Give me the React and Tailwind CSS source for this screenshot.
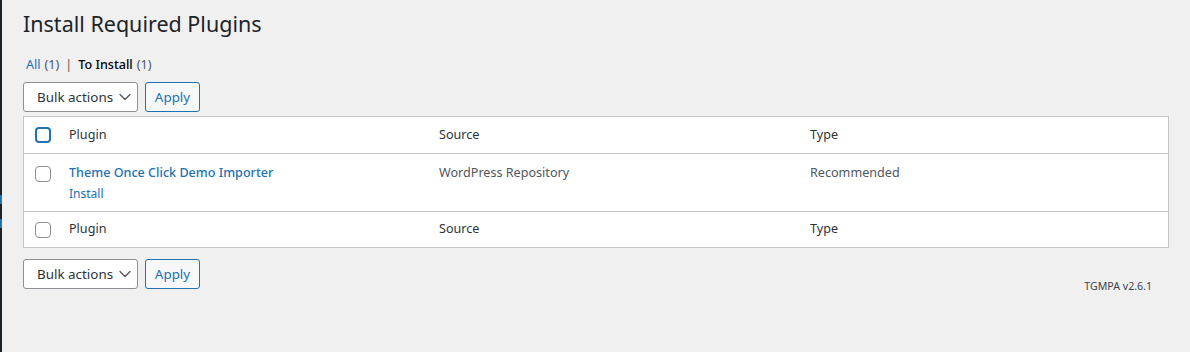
import { ChevronDown } from "lucide-react";

const font = { fontFamily: '"Noto Sans", "Open Sans", sans-serif' };

function Checkbox({ focused }) {
  return (
    <span
      className={
        "block w-4 h-4 rounded-[4px] bg-white " +
        (focused
          ? "border-2 border-[#2271b1]"
          : "border border-[#8c8f94]")
      }
    />
  );
}

function BulkActions() {
  return (
    <div className="flex gap-[7px] whitespace-nowrap">
      <div className="flex items-center justify-between w-[115px] h-[30px] pl-[13px] pr-[2px] bg-white border border-[#8c8f94] rounded-[3px] text-[13.4px] text-[#2c3338]">
        <span>Bulk actions</span>
        <ChevronDown size={20} strokeWidth={1.6} className="text-[#50575e]" />
      </div>
      <div className="flex items-center justify-center w-[55px] h-[30px] bg-[#f6f7f7] border border-[#2271b1] rounded-[3px] text-[13.4px] text-[#2271b1]">
        Apply
      </div>
    </div>
  );
}

function HeadRow({ focused, top }) {
  return (
    <div
      className={
        "flex items-center text-[12.6px] text-[#2c3338] " +
        (top
          ? "h-[37px] border-b border-[#c3c4c7]"
          : "h-[36px] border-t border-[#c3c4c7]")
      }
    >
      <div className="w-[35px] pl-[11px]">
        <Checkbox focused={focused} />
      </div>
      <div className="w-[370px] pl-[10px]">Plugin</div>
      <div className="w-[371px] pl-[10px]">Source</div>
      <div className="flex-1 pl-[10px]">Type</div>
    </div>
  );
}

export default function App() {
  return (
    <div className="flex min-h-[352px] bg-[#f0f0f1]" style={font}>
      <div className="w-[2px] bg-[#1d2327] flex flex-col">
        <div className="h-[195px]" />
        <div className="h-[9px] bg-[#2271b1]" />
        <div className="h-[15px]" />
        <div className="h-[9px] bg-[#2271b1]" />
      </div>
      <div className="flex-1 pl-[21px] pr-[21px]">
        <h1 className="pt-[9px] text-[21.5px] leading-[30px] text-[#1d2327]">
          Install Required Plugins
        </h1>
        <div className="mt-[16px] text-[12.6px] leading-[20px] text-[#50575e] flex items-center">
          <span className="text-[#2271b1] ml-[3px]">All</span>
          <span className="ml-[4px]">(1)</span>
          <span className="mx-[6px]">|</span>
          <span className="text-[#000] font-medium">To Install</span>
          <span className="ml-[4px]">(1)</span>
        </div>
        <div className="mt-[7px]">
          <BulkActions />
        </div>
        <div className="mt-[4px] bg-white border border-[#c3c4c7]">
          <HeadRow focused top />
          <div className="flex h-[57px] text-[12.6px] text-[#50575e]">
            <div className="w-[35px] pl-[11px] pt-[12px]">
              <Checkbox />
            </div>
            <div className="w-[370px] pl-[10px] pt-[8px] leading-[21px]">
              <div className="text-[#2271b1] font-medium">
                Theme Once Click Demo Importer
              </div>
              <div className="text-[#2271b1] text-[12px]">Install</div>
            </div>
            <div className="w-[371px] pl-[10px] pt-[8px] leading-[21px]">
              WordPress Repository
            </div>
            <div className="flex-1 pl-[10px] pt-[8px] leading-[21px]">
              Recommended
            </div>
          </div>
          <HeadRow />
        </div>
        <div className="mt-[11px] flex items-start justify-between">
          <BulkActions />
          <div className="mt-[20px] mr-[17px] text-[10.6px] text-[#3c434a]">
            TGMPA v2.6.1
          </div>
        </div>
      </div>
    </div>
  );
}
